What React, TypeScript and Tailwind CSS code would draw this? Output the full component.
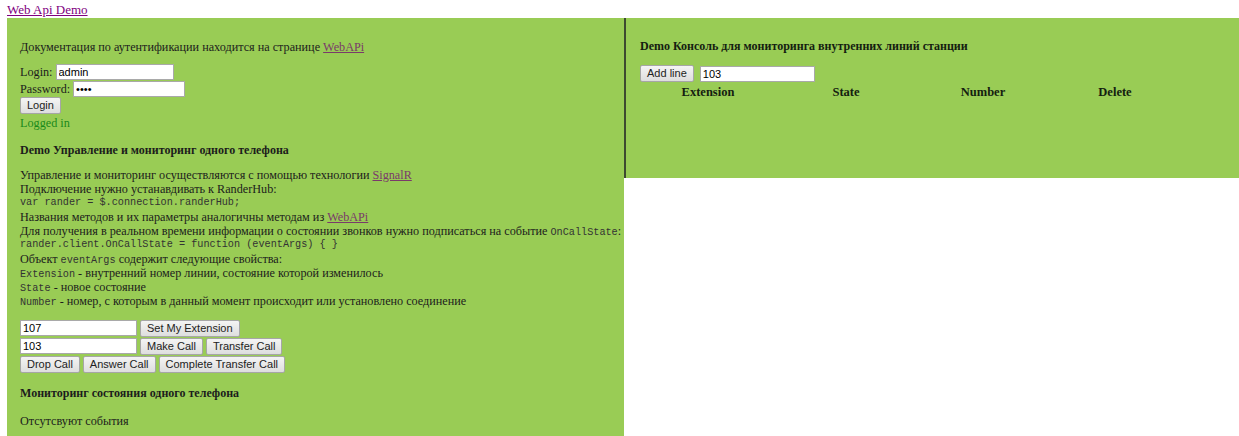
import React from 'react';

const serif = "font-['Liberation_Serif','Times_New_Roman',serif]";
const mono = "font-['Liberation_Mono','Courier_New',monospace] text-[10.2px] text-[#333]";

const Field: React.FC<{ value: string; width: string; type?: string }> = ({ value, width, type = 'text' }) => (
  <input
    type={type}
    defaultValue={value}
    className={`${width} h-[16px] bg-white border border-[#a9a9a9] px-[2px] text-[11px] text-black font-['Liberation_Sans',Arial,sans-serif] outline-none`}
  />
);

const Btn: React.FC<{ label: string }> = ({ label }) => (
  <button className="h-[17px] px-[6px] bg-gradient-to-b from-[#f4f4f4] to-[#dedede] border border-[#a6a6a6] rounded-[2px] text-[11px] leading-none text-[#222] font-['Liberation_Sans',Arial,sans-serif]">
    {label}
  </button>
);

const Link: React.FC<{ children: React.ReactNode }> = ({ children }) => (
  <a href="#" className="text-[#7a3a6a] underline">{children}</a>
);

// one 14px text line, used for every row of the description block
const Line: React.FC<{ children: React.ReactNode; className?: string }> = ({ children, className = '' }) => (
  <p className={`h-[14px] leading-[14px] whitespace-nowrap ${className}`}>{children}</p>
);

export default function App() {
  return (
    <div className={`${serif} text-[12.2px] leading-[14px] text-[#1c1c1c] bg-white h-[436px] overflow-hidden`}>
      <div className="px-[7px] h-[18px] pt-[3px] text-[13px]">
        <a href="#" className="text-[#800080] underline">Web Api Demo</a>
      </div>

      <div className="flex items-start pl-[7px]">
        {/* phone control */}
        <div className="w-[617px] bg-[#99cc55] pl-[13px] pt-[22px] pb-[20px]">
          <Line>Документация по аутентификации находится на странице <Link>WebAPi</Link></Line>

          <div className="mt-[10px] flex items-center h-[16px] gap-[3px]">
            <span>Login:</span>
            <Field value="admin" width="w-[118px]" />
          </div>
          <div className="mt-[1px] flex items-center h-[16px] gap-[3px]">
            <span>Password:</span>
            <Field value="1234" width="w-[112px]" type="password" />
          </div>
          <div className="flex">
            <Btn label="Login" />
          </div>
          <Line className="mt-[2px] text-[#1a8a1a]">Logged in</Line>

          <Line className="mt-[13px] font-bold text-[12px]">Demo Управление и мониторинг одного телефона</Line>

          <div className="mt-[11px]">
            <Line>Управление и мониторинг осуществляются с помощью технологии <Link>SignalR</Link></Line>
            <Line>Подключение нужно устанавдивать к RanderHub:</Line>
            <Line className={mono}>var rander = $.connection.randerHub;</Line>
            <Line>Названия методов и их параметры аналогичны методам из <Link>WebAPi</Link></Line>
            <Line>Для получения в реальном времени информации о состоянии звонков нужно подписаться на событие <span className={mono}>OnCallState</span>:</Line>
            <Line className={mono}>rander.client.OnCallState = function (eventArgs) {'{ }'}</Line>
            <Line>Объект <span className={mono}>eventArgs</span> содержит следующие свойства:</Line>
            <Line><span className={mono}>Extension</span> - внутренний номер линии, состояние которой изменилось</Line>
            <Line><span className={mono}>State</span> - новое состояние</Line>
            <Line><span className={mono}>Number</span> - номер, с которым в данный момент происходит или установлено соединение</Line>
          </div>

          <div className="mt-[12px] flex flex-col gap-[1px]">
            <div className="flex gap-[3px]">
              <Field value="107" width="w-[117px]" />
              <Btn label="Set My Extension" />
            </div>
            <div className="flex gap-[3px]">
              <Field value="103" width="w-[117px]" />
              <Btn label="Make Call" />
              <Btn label="Transfer Call" />
            </div>
            <div className="flex gap-[3px]">
              <Btn label="Drop Call" />
              <Btn label="Answer Call" />
              <Btn label="Complete Transfer Call" />
            </div>
          </div>

          <Line className="mt-[13px] font-bold text-[12px]">Мониторинг состояния одного телефона</Line>
          <Line className="mt-[14px]">Отсутсвуют события</Line>
        </div>

        {/* station console */}
        <div className="flex-1 h-[160px] bg-[#99cc55] border-l-2 border-[#3d4a30] pl-[14px] pt-[21px]">
          <Line className="font-bold text-[12px] text-[#142010]">Demo Консоль для мониторинга внутренних линий станции</Line>
          <div className="mt-[12px] flex items-center gap-[6px]">
            <Btn label="Add line" />
            <Field value="103" width="w-[115px]" />
          </div>
          <div className="mt-[3px] grid grid-cols-[136px_140px_134px_130px] font-bold text-[12.5px] text-center text-[#142010]">
            <span>Extension</span>
            <span>State</span>
            <span>Number</span>
            <span>Delete</span>
          </div>
        </div>
      </div>
    </div>
  );
}
